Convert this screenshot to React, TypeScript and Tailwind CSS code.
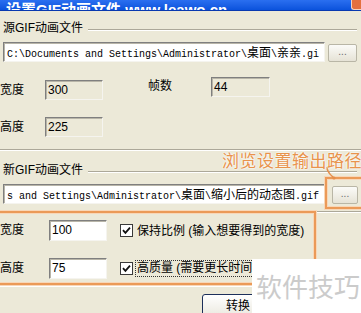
import React from 'react';

const ui = { fontFamily: '"Liberation Sans", "Noto Sans CJK SC", sans-serif' };
const mono = { fontFamily: '"Liberation Mono", "Noto Sans CJK SC", monospace' };

function Etched({ className = '' }: { className?: string }) {
  return <div className={`h-[2px] border-t border-t-[#aca899] border-b border-b-white ${className}`} />;
}

function Sunken({ value, white, w, h = 20, className = '' }: { value: string; white?: boolean; w: number; h?: number; className?: string }) {
  return (
    <div
      className={`shrink-0 border border-t-[#7f7f7f] border-l-[#7f7f7f] border-b-[#f5f4ef] border-r-[#f5f4ef] shadow-[inset_1px_1px_0_#b8b5a8] pl-[2px] text-[12px] leading-[18px] ${white ? 'bg-white' : 'bg-[#ece9d8]'} ${className}`}
      style={{ width: w, height: h }}
    >
      {value}
    </div>
  );
}

function Cjk({ children }: { children: React.ReactNode }) {
  return <span className="text-[12px]" style={{ fontFamily: '"Noto Sans CJK SC", sans-serif' }}>{children}</span>;
}

function DotsButton({ className = '' }: { className?: string }) {
  return (
    <div className={`shrink-0 h-[18px] rounded-[2px] border border-[#b9b6a6] bg-gradient-to-b from-[#fbfbf8] to-[#e6e3d6] flex items-center justify-center text-[10px] text-[#6b6b6b] leading-none pb-[3px] ${className}`}>
      ...
    </div>
  );
}

function Check() {
  return (
    <div className="shrink-0 w-[13px] h-[13px] border border-[#3a3a3a] bg-white flex items-center justify-center">
      <svg width="9" height="9" viewBox="0 0 9 9">
        <path d="M1 4.2 L3.4 6.8 L8 1.6" stroke="#111" strokeWidth="1.8" fill="none" />
      </svg>
    </div>
  );
}

export default function App() {
  return (
    <div className="relative w-[361px] h-[313px] overflow-hidden bg-[#ece9d8] text-black text-[12px]" style={ui}>
      {/* title bar */}
      <div className="h-[11px] overflow-hidden bg-gradient-to-b from-[#2a6ff0] to-[#0a52dc] border-b border-b-[#0839b0] flex items-end relative">
        <div className="pl-[6px] text-white font-bold text-[15px] leading-[15px] translate-y-[7px] whitespace-nowrap" style={{ fontFamily: '"Liberation Sans", "Noto Sans CJK SC", sans-serif' }}>
          设置GIF动画文件 www.leawo.cn
        </div>
        <div className="absolute right-0 top-0 w-[10px] h-[10px] rounded-bl-[3px] bg-[#e4703f] border-l border-b border-[#f6d2bd]" />
      </div>

      {/* group 1 */}
      <div className="mt-[9px] h-[16px] flex items-center">
        <span className="ml-[3px] leading-[16px]">源GIF动画文件</span>
        <Etched className="flex-1 ml-[5px] mr-[4px] mt-[4px]" />
      </div>
      <div className="mt-[6px] flex items-end">
        <div className="ml-[3px] shrink-0 w-[322px] h-[20px] bg-white border border-t-[#7f7f7f] border-l-[#7f7f7f] border-b-[#f5f4ef] border-r-[#f5f4ef] shadow-[inset_1px_1px_0_#b8b5a8] pl-[3px] text-[10px] leading-[18px] whitespace-nowrap overflow-hidden" style={mono}>
          C:\Documents and Settings\Administrator\<Cjk>桌面</Cjk>\<Cjk>亲亲</Cjk>.gi
        </div>
        <DotsButton className="ml-[3px] w-[29px]" />
      </div>

      <div className="mt-[15px] flex items-start">
        <span className="w-[45px] mt-[3px] leading-[20px]">宽度</span>
        <Sunken value="300" w={58} className="mt-[3px]" />
        <span className="ml-[45px] mt-[1px] leading-[16px]">帧数</span>
        <Sunken value="44" w={59} className="ml-[39px]" />
      </div>
      <div className="mt-[17px] flex items-start">
        <span className="w-[45px] leading-[20px]">高度</span>
        <Sunken value="225" w={58} />
      </div>

      <Etched className="mt-[12px]" />

      {/* group 2 */}
      <div className="mt-[11px] h-[16px] flex items-center">
        <span className="ml-[3px] leading-[16px]">新GIF动画文件</span>
        <Etched className="flex-1 ml-[5px] mr-[4px] mt-[4px]" />
      </div>
      <div className="mt-[6px] flex items-end">
        <div className="ml-[3px] shrink-0 w-[322px] h-[20px] bg-white border border-t-[#7f7f7f] border-l-[#7f7f7f] border-b-[#f5f4ef] border-r-[#f5f4ef] shadow-[inset_1px_1px_0_#b8b5a8] pl-[3px] text-[10px] leading-[18px] whitespace-nowrap overflow-hidden" style={mono}>
          s and Settings\Administrator\<Cjk>桌面</Cjk>\<Cjk>缩小后的动态图</Cjk>.gif
        </div>
        <DotsButton className="ml-[7px] w-[26px]" />
      </div>

      <Etched className="mt-[7px]" />

      <div className="mt-[7px] flex items-center">
        <span className="w-[49px] leading-[21px]">宽度</span>
        <Sunken value="100" white w={58} h={21} />
        <div className="ml-[13px]"><Check /></div>
        <span className="ml-[4px] leading-[16px]">保持比例 (输入想要得到的宽度)</span>
      </div>
      <div className="mt-[17px] flex items-center">
        <span className="w-[49px] leading-[21px]">高度</span>
        <Sunken value="75" white w={58} h={21} />
        <div className="ml-[13px]"><Check /></div>
        <span className="ml-[2px] px-[1px] leading-[15px] border border-dotted border-[#333] whitespace-nowrap">高质量 (需要更长时间)</span>
      </div>

      <Etched className="mt-[6px]" />

      <div className="mt-[7px] ml-[202px] w-[72px] h-[23px] rounded-[3px] border border-[#1c2f5a] bg-gradient-to-b from-[#ffffff] to-[#ebe9df] flex items-center justify-center">
        转换
      </div>

      {/* annotation overlays */}
      <div className="absolute left-[-4px] top-[211px] w-[320px] h-[74px] border-2 border-[#eb9a58] shadow-[0_0_0_1px_#f8d7b8,inset_0_0_0_1px_#f8d7b8]" />
      <div className="absolute left-[325px] top-[177px] w-[40px] h-[32px] border-2 border-[#eb9a58] shadow-[0_0_0_1px_#f8d7b8,inset_0_0_0_1px_#f8d7b8]" />
      <svg className="absolute left-[322px] top-[166px]" width="20" height="16" viewBox="0 0 20 16">
        <path d="M5 1 C5 7 9 9 12 12" stroke="#e58f4c" strokeWidth="1.5" fill="none" />
        <circle cx="12" cy="12" r="1.6" fill="#e58f4c" />
      </svg>
      <div
        className="absolute left-[222px] top-[150px] text-[17px] leading-[20px] tracking-[0.5px] whitespace-nowrap text-[#e8934c]"
        style={{ fontFamily: '"Noto Sans CJK SC", sans-serif', textShadow: '0 0 2px #fff, 0 0 2px #fff' }}
      >
        浏览设置输出路径
      </div>
      <div className="absolute left-[252px] top-[259px] w-[109px] h-[54px] bg-white flex items-center pl-[4px]">
        <span className="text-[26px] leading-[26px] text-[#cbcbcb]" style={{ fontFamily: '"Noto Sans CJK SC", sans-serif' }}>
          软件技巧
        </span>
      </div>
    </div>
  );
}
